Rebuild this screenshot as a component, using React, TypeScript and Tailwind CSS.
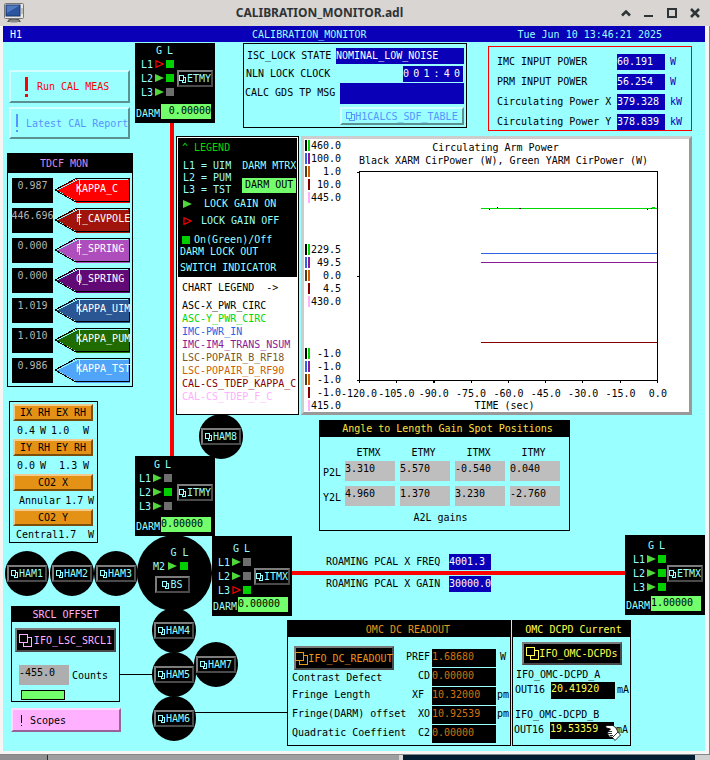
import React from "react";
import clsx from "clsx";

type Led = "green" | "gray";
type Gain = "on" | "off";

const kappas = [
    { value: "0.987", label: "KAPPA_C", fill: "#ff0000" },
    { value: "446.696", label: "F_CAVPOLE", fill: "#a0140c" },
    { value: "0.000", label: "F_SPRING", fill: "#ae4ebc" },
    { value: "0.000", label: "Q_SPRING", fill: "#610a75" },
    { value: "1.019", label: "KAPPA_UIM", fill: "#2a5693" },
    { value: "1.010", label: "KAPPA_PUM", fill: "#216c00" },
    { value: "0.986", label: "KAPPA_TST", fill: "#51a5f8" },
];

const heaters = [
    { title: "IX RH EX RH", cells: [["0.4", "ml-[4px]"], ["W", "ml-[5px]"], ["1.0", "ml-[5px]"], ["W", "ml-auto mr-[5px]"]] },
    { title: "IY RH EY RH", cells: [["0.0", "ml-[4px]"], ["W", "ml-[5px]"], ["1.3", "ml-[13px]"], ["W", "ml-auto mr-[5px]"]] },
    { title: "CO2 X", cells: [["Annular", "ml-[6px]"], ["1.7", "ml-[4px]"], ["W", "ml-auto"]] },
    { title: "CO2 Y", cells: [["Central", "ml-[3px]"], ["1.7", ""], ["W", "ml-auto"]] },
];

const powers = [
    { label: "IMC INPUT POWER", value: "60.191", unit: "W" },
    { label: "PRM INPUT POWER", value: "56.254", unit: "W" },
    { label: "Circulating Power X", value: "379.328", unit: "kW" },
    { label: "Circulating Power Y", value: "378.839", unit: "kW" },
];

const channels = [
    { name: "ASC-X_PWR_CIRC", color: "text-black" },
    { name: "ASC-Y_PWR_CIRC", color: "text-[#00d800]" },
    { name: "IMC-PWR_IN", color: "text-[#2a63e4]" },
    { name: "IMC-IM4_TRANS_NSUM", color: "text-[#8b1a96]" },
    { name: "LSC-POPAIR_B_RF18", color: "text-[#7c5726]" },
    { name: "LSC-POPAIR_B_RF90", color: "text-[#cd6100]" },
    { name: "CAL-CS_TDEP_KAPPA_C", color: "text-[#870000]" },
    { name: "CAL-CS_TDEP_F_C", color: "text-[#ffb0ff]" },
];

const axisBars = [
    ["bg-black", "bg-[#00d800]"],
    ["bg-[#2a63e4]", "bg-[#8b1a96]"],
    ["bg-[#5c3a14]", "bg-[#cd6100]"],
    ["bg-transparent", "bg-[#870000]"],
    ["bg-transparent", "bg-[#ffb0ff]"],
];

const axisGroups = [
    ["460.0", "100.0", "1.0", "10.0", "445.0"],
    ["229.5", "49.5", "0.0", "4.5", "430.0"],
    ["-1.0", "-1.0", "-1.0", "-1.0", "415.0"],
];

const timeTicks = ["-120.0", "-105.0", "-90.0", "-75.0", "-60.0", "-45.0", "-30.0", "-15.0", "0.0"];

const gains = [
    { row: "P2L", values: ["3.310", "5.570", "-0.540", "0.040"] },
    { row: "Y2L", values: ["4.960", "1.370", "3.230", "-2.760"] },
];
const optics = ["ETMX", "ETMY", "ITMX", "ITMY"];

const readouts = [
    { code: "PREF", value: "1.68680", unit: "W" },
    { code: "CD", value: "0.00000", unit: "" },
    { code: "XF", value: "10.32000", unit: "pm" },
    { code: "XO", value: "10.92539", unit: "pm" },
    { code: "C2", value: "0.00000", unit: "" },
];

const SmallIcon = () => (
    <svg className="w-[7px] h-[8px] shrink-0" viewBox="0 0 7 8" fill="none" stroke="currentColor" shapeRendering="crispEdges">
        <path d="M0.5 0.5H4.5V5.5H0.5ZM4.5 2.5H6.5V7.5H3.5V5.5" />
    </svg>
);

const BigIcon = () => (
    <svg className="w-[13px] h-[13px] shrink-0" viewBox="0 0 13 13" fill="none" stroke="currentColor" shapeRendering="crispEdges">
        <path d="M0.5 0.5H8.5V8.5H0.5ZM8.5 3.5H12.5V12.5H4.5V8.5" />
    </svg>
);

const Triangle = ({ gain }: { gain: Gain }) => (
    <svg className="w-[9px] h-[8px] shrink-0" viewBox="0 0 9 8">
        {gain === "on" ? (
            <path d="M0 0L9 4L0 8Z" fill="#4fd73b" />
        ) : (
            <path d="M1 0.7L8 4L1 7.3Z" fill="none" stroke="#ff0000" strokeWidth="1.2" />
        )}
    </svg>
);

const Square = ({ led }: { led: Led }) => (
    <span className={clsx("w-[8px] h-[8px] shrink-0", led === "green" ? "bg-[#00d000]" : "bg-[#6e6e6e]")} />
);

const NodeButton = ({ name, className }: { name: string; className?: string }) => (
    <button className={clsx("flex items-center justify-center gap-px h-[17px] border-2 border-t-[#7c7c7c] border-l-[#7c7c7c] border-b-[#4a4a4a] border-r-[#4a4a4a] bg-black text-[#99ffff]", className)}>
        <SmallIcon />
        {name}
    </button>
);

type TestMassProps = {
    name: string;
    darm: string;
    rows: [Gain, Led][];
    className: string;
    inset: string;
    darmAlign?: string;
};

const TestMass = ({ name, darm, rows, className, inset, darmAlign }: TestMassProps) => (
    <div className={clsx("absolute w-[80px] h-[80px] bg-black text-[#99ffff] flex flex-col", className)}>
        <div className={clsx("flex items-center justify-between pr-[2px]", inset)}>
            <div>
                <div className="flex gap-[5px] pl-[15px]">
                    <span>G</span>
                    <span>L</span>
                </div>
                {rows.map(([gain, led], i) => (
                    <div key={i} className="flex items-center gap-[2px] h-[14px]">
                        <span>L{i + 1}</span>
                        <Triangle gain={gain} />
                        <Square led={led} />
                    </div>
                ))}
            </div>
            <NodeButton name={name} className="w-[36px] mt-[14px]" />
        </div>
        <div className="mt-auto mb-[3px] flex">
            <span className="w-[26px] pl-px pt-[3px]">DARM</span>
            <output className={clsx("w-[50px] h-[15px] bg-[#73ff6b] text-black", darmAlign)}>{darm}</output>
        </div>
    </div>
);

const Ham = ({ name, className }: { name: string; className: string }) => (
    <div className={clsx("absolute w-[44px] h-[45px] rounded-full bg-black flex items-center justify-center", className)}>
        <NodeButton name={name} className="w-[40px] shrink-0" />
    </div>
);

const Diagram = () => (
    <>
        <div className="absolute left-[167px] top-[81px] w-[4px] h-[333px] bg-[#ff0000]" />
        <div className="absolute left-[288px] right-[80px] top-[529px] h-[4px] bg-[#ff0000]" />
        <div className="absolute left-[117px] top-[632px] w-[33px] h-px bg-black" />
        <div className="absolute left-[192px] top-[670px] w-[92px] h-px bg-black" />

        <Ham name="HAM8" className="left-[196px] top-[372px]" />
        <TestMass
            name="ETMY"
            darm="0.00000"
            rows={[["off", "green"], ["on", "green"], ["on", "gray"]]}
            className="left-[132px] top-px"
            inset="pt-px pl-[6px]"
            darmAlign="text-right"
        />
        <TestMass
            name="ITMY"
            darm="0.00000"
            rows={[["on", "gray"], ["on", "green"], ["on", "gray"]]}
            className="left-[132px] top-[414px]"
            inset="pt-[2px] pl-[4px]"
        />
        <Ham name="HAM1" className="left-[2px] top-[509px]" />
        <Ham name="HAM2" className="left-[47px] top-[509px]" />
        <Ham name="HAM3" className="left-[91px] top-[509px]" />

        <div className="absolute left-[134px] top-[493px] w-[75px] h-[76px] rounded-full bg-black text-[#99ffff] flex flex-col items-center">
            <div className="flex gap-[6px] pt-[11px] pl-[10px]">
                <span>G</span>
                <span>L</span>
            </div>
            <div className="flex items-center gap-[3px] h-[14px] mr-[8px]">
                <span>M2</span>
                <Triangle gain="on" />
                <Square led="green" />
            </div>
            <NodeButton name="BS" className="w-[35px] mt-[3px] mr-[4px]" />
        </div>

        <TestMass
            name="ITMX"
            darm="0.00000"
            rows={[["on", "gray"], ["on", "gray"], ["off", "green"]]}
            className="left-[209px] top-[494px]"
            inset="pt-[6px] pl-[6px]"
        />
        <TestMass
            name="ETMX"
            darm="1.00000"
            rows={[["on", "green"], ["on", "green"], ["on", "green"]]}
            className="right-0 top-[493px]"
            inset="pt-[4px] pl-[8px]"
        />
        <Ham name="HAM4" className="left-[149px] top-[566px]" />
        <Ham name="HAM7" className="left-[191px] top-[600px]" />
        <Ham name="HAM5" className="left-[149px] top-[610px]" />
        <Ham name="HAM6" className="left-[149px] top-[654px]" />
    </>
);

const Kappa = ({ value, label, fill }: { value: string; label: string; fill: string }) => (
    <div className="flex gap-[2px]">
        <output className="w-[41px] h-[25px] pt-px bg-black text-[#b4b4b4] flex justify-center">{value}</output>
        <button className="relative w-[75px] h-[25px] text-white whitespace-nowrap">
            <svg className="absolute inset-0 w-full h-full" viewBox="0 0 75 25" shapeRendering="crispEdges">
                <path d="M0 12L22 1H75V25H22Z" fill={fill} />
                <path d="M2 12L23 1.5H73M2 13L20 23M24.5 1V17" stroke="#99ffff" fill="none" />
                <path d="M0 12L21 0.5H74.5V23.5H20L0 12" stroke="#000" fill="none" />
            </svg>
            <span className="relative flex justify-end pb-[5px]">
                <span className="w-[54px] text-left">{label}</span>
            </span>
        </button>
    </div>
);

const Sidebar = () => (
    <div className="w-[130px] shrink-0 flex flex-col items-start pt-[28px] pb-[19px]">
        <button className="ml-[6px] w-[121px] h-[33px] flex items-center border-2 border-t-[#d2ffff] border-l-[#d2ffff] border-b-[#5a9191] border-r-[#5a9191] text-[#ff0000] overflow-hidden whitespace-nowrap">
            <svg className="w-[3px] h-[20px] ml-[14px] mr-[9px]" viewBox="0 0 3 20" fill="currentColor">
                <path d="M0 0H3V14H0ZM0 17H3V20H0Z" />
            </svg>
            Run CAL MEAS
        </button>
        <button className="ml-[6px] mt-[4px] w-[121px] h-[32px] flex items-center border-2 border-t-[#d2ffff] border-l-[#d2ffff] border-b-[#5a9191] border-r-[#5a9191] text-[#5893ff] whitespace-nowrap">
            <svg className="w-[2px] h-[18px] ml-[5px] mr-[8px] shrink-0" viewBox="0 0 2 18" fill="currentColor">
                <path d="M0 0H2V13H0ZM0 16H2V18H0Z" />
            </svg>
            Latest CAL Report
        </button>

        <section className="ml-[4px] mt-[14px] w-[126px] border border-black pb-[3px]">
            <h2 className="h-[19px] mb-[5px] pr-[12px] bg-black text-[#d68be8] flex items-center justify-center">TDCF MON</h2>
            <div className="flex flex-col gap-[5px] pl-[4px]">
                {kappas.map((k) => (
                    <Kappa key={k.label} {...k} />
                ))}
            </div>
        </section>

        <section className="ml-[6px] mt-[14px] w-[89px] border border-black px-[3px] pt-[2px]">
            {heaters.map((h, i) => (
                <div key={h.title}>
                    <button className="w-[80px] h-[17px] flex items-center justify-center border-2 border-t-[#f4cb8d] border-l-[#f4cb8d] border-b-[#7d4e0a] border-r-[#7d4e0a] bg-[#e39216]">
                        {h.title}
                    </button>
                    <div className={clsx("flex items-center", i === 3 ? "h-[16px]" : "h-[18px]")}>
                        {h.cells.map(([text, place], j) => (
                            <span key={j} className={place}>{text}</span>
                        ))}
                    </div>
                </div>
            ))}
        </section>

        <section className="ml-[8px] mt-[63px] w-[109px] h-[96px] border border-black">
            <h2 className="h-[15px] pt-px bg-black text-[#ffb0ff] text-center">SRCL OFFSET</h2>
            <button className="mt-[6px] ml-[3px] w-[101px] h-[24px] flex items-center justify-center gap-[2px] border-2 border-t-[#7c7c7c] border-l-[#7c7c7c] border-b-[#4a4a4a] border-r-[#4a4a4a] bg-black text-[#ffb0ff]">
                <BigIcon />
                IFO_LSC_SRCL1
            </button>
            <label className="mt-[13px] ml-[7px] flex items-center gap-[3px]">
                <input className="w-[50px] h-[20px] pb-[6px] bg-[#aeaeae]" defaultValue="-455.0" />
                Counts
            </label>
            <div className="mt-[5px] ml-[9px] w-[44px] h-[10px] border border-black bg-[#73ff6b]" />
        </section>

        <button className="ml-[8px] mt-[6px] w-[110px] h-[24px] pl-[8px] flex items-center border-2 border-t-[#ffdcff] border-l-[#ffdcff] border-b-[#966496] border-r-[#966496] bg-[#ffb0ff]">
            <svg className="w-[2px] h-[11px] mr-[7px]" viewBox="0 0 2 11" fill="currentColor" shapeRendering="crispEdges">
                <path d="M0 0H1V8H0ZM0 10H1V11H0Z" />
            </svg>
            Scopes
        </button>
    </div>
);

const LockPanel = () => (
    <section className="w-[224px] h-[85px] border border-black pt-[4px] pr-[2px]">
        <div className="flex justify-between">
            <span className="pl-[3px] pt-px">ISC_LOCK STATE</span>
            <output className="w-[128px] h-[16px] pt-px bg-[#0a00b8] text-white">NOMINAL_LOW_NOISE</output>
        </div>
        <div className="mt-[2px] pr-px flex justify-between">
            <span className="pl-[2px] pt-px">NLN LOCK CLOCK</span>
            <output className="w-[60px] h-[16px] pt-px pr-[3px] bg-[#0a00b8] text-white flex justify-between">
                {"001:40".split("").map((c, i) => (
                    <span key={i}>{c}</span>
                ))}
            </output>
        </div>
        <div className="mt-px flex justify-between">
            <span className="pt-[3px] pl-px">CALC GDS TP MSG</span>
            <output className="w-[124px] h-[21px] bg-[#0a00b8]" />
        </div>
        <button className="mt-[3px] ml-auto w-[124px] h-[18px] flex items-center justify-center border-2 border-t-[#d2ffff] border-l-[#d2ffff] border-b-[#5a9191] border-r-[#5a9191] text-[#5893ff]">
            <svg className="w-[9px] h-[9px]" viewBox="0 0 9 9" fill="none" stroke="currentColor" shapeRendering="crispEdges">
                <path d="M0.5 0.5H5.5V6.5H0.5ZM5.5 2.5H8.5V8.5H3.5V6.5" />
            </svg>
            H1CALCS_SDF_TABLE
        </button>
    </section>
);

const PowerPanel = () => (
    <section className="mt-[3px] w-[204px] h-[85px] border border-[#ff0000] pt-[7px] pl-[8px] flex flex-col gap-[4px]">
        {powers.map((p) => (
            <div key={p.label} className="flex h-[16px]">
                <span className="w-[120px] pt-px">{p.label}</span>
                <output className="w-[48px] pt-px bg-[#0a00b8] text-white">{p.value}</output>
                <span className="pl-[5px] pt-px text-[#0a00b8]">{p.unit}</span>
            </div>
        ))}
    </section>
);

const Legend = () => (
    <section className="w-[123px] shrink-0 border border-black bg-white p-px">
        <div className="bg-black text-[#99ffff] h-[139px] pl-[2px] pt-[3px]">
            <h2 className="text-[#00d800] pl-[2px]">^ LEGEND</h2>
            <div className="mt-[6px] pl-[3px] flex gap-[11px] leading-[12px]">
                <div>
                    <p>L1 = UIM</p>
                    <p>L2 = PUM</p>
                    <p>L3 = TST</p>
                </div>
                <div>
                    <p className="whitespace-nowrap">DARM MTRX</p>
                    <p className="mt-[6px] w-[54px] h-[15px] pt-px bg-[#73ff6b] text-black text-center">DARM OUT</p>
                </div>
            </div>
            <div className="mt-px pl-[3px] flex items-center gap-[12px]">
                <Triangle gain="on" />
                LOCK GAIN ON
            </div>
            <div className="mt-[4px] pl-[3px] flex items-center gap-[9px]">
                <Triangle gain="off" />
                LOCK GAIN OFF
            </div>
            <div className="mt-[6px] pl-[2px] flex items-center gap-[4px]">
                <Square led="green" />
                On(Green)/Off
            </div>
            <p className="leading-[12px]">DARM LOCK OUT</p>
            <p className="mt-[3px]">SWITCH INDICATOR</p>
        </div>
        <div className="pl-[4px] pt-[4px]">
            <h2 className="whitespace-pre mb-[5px]">CHART LEGEND  -&gt;</h2>
            {channels.map((c) => (
                <p key={c.name} className={clsx("leading-[13px]", c.color)}>{c.name}</p>
            ))}
        </div>
    </section>
);

const StripChart = () => (
    <section className="ml-[2px] flex-1 h-[279px] flex bg-white border-[3px] border-t-[#cdcdcd] border-l-[#cdcdcd] border-b-[#999999] border-r-[#999999]">
        <div className="w-[37px] shrink-0 pl-px flex flex-col justify-between">
            {axisGroups.map((group, g) => (
                <div key={g}>
                    {group.map((label, i) => (
                        <div key={i} className="flex items-center h-[13px]">
                            <span className={clsx("w-[2px] h-[11px]", axisBars[i][0])} />
                            <span className={clsx("w-[2px] h-[11px] ml-px", axisBars[i][1])} />
                            <span className="ml-auto">{label}</span>
                        </div>
                    ))}
                </div>
            ))}
        </div>
        <div className="flex-1 pl-[18px] pr-[31px] pt-[2px] text-center">
            <h2 className="pr-[26px] leading-[13px]">Circulating Arm Power</h2>
            <p className="pr-[10px] leading-[13px] whitespace-nowrap">Black XARM CirPower (W), Green YARM CirPower (W)</p>
            <svg className="mt-[4px] w-full h-[214px] overflow-visible" viewBox="0 0 297 214" preserveAspectRatio="none" fill="none" shapeRendering="crispEdges">
                <rect x="0.5" y="0.5" width="296" height="209" stroke="#000" />
                <path d="M-2 1.5H0M-2 105.5H0M-2 209.5H0M0.5 210V212M37.5 210V212M74.5 210V212M111.5 210V212M148.5 210V212M185.5 210V212M222.5 210V212M259.5 210V212M296.5 210V212" stroke="#000" />
                <path d="M121 37.5H296" stroke="#00d800" />
                <path d="M129 38.5H130M137 36.5H138M159 37.5H161M286 38.5H287M290 37.5H291" stroke="#000" />
                <path d="M291 36.5H294" stroke="#00d800" />
                <path d="M121 82.5H296" stroke="#2a63e4" />
                <path d="M121 91.5H296" stroke="#8b1a96" />
                <path d="M121 171.5H296" stroke="#870000" />
            </svg>
            <div className="mt-[2px] flex justify-between">
                {timeTicks.map((t) => (
                    <span key={t} className="w-0 flex justify-center whitespace-nowrap">{t}</span>
                ))}
            </div>
            <p className="pr-[8px] leading-[12px]">TIME (sec)</p>
        </div>
    </section>
);

const SpotTable = () => (
    <section className="mt-[5px] ml-[143px] w-[251px] h-[111px] border border-black">
        <h2 className="h-[16px] pt-px bg-black text-[#ffe040] text-center pl-[6px]">Angle to Length Gain Spot Positions</h2>
        <table className="mt-[7px]">
            <thead>
                <tr>
                    <td className="w-[25px]" />
                    {optics.map((o) => (
                        <th key={o} scope="col" className="p-0 w-[55px] h-[17px] pr-[8px] align-middle font-normal text-center">{o}</th>
                    ))}
                </tr>
            </thead>
            <tbody>
                {gains.map((g) => (
                    <tr key={g.row}>
                        <th scope="row" className="p-0 pl-[3px] pb-[3px] font-normal text-left">{g.row}</th>
                        {g.values.map((v, i) => (
                            <td key={i} className="p-0 pb-[5px]">
                                <input aria-label={`${g.row} ${optics[i]}`} defaultValue={v} className="block w-[50px] h-[20px] pb-[6px] bg-[#bebebe]" />
                            </td>
                        ))}
                    </tr>
                ))}
            </tbody>
        </table>
        <p className="text-center pr-[8px]">A2L gains</p>
    </section>
);

const OmcReadout = () => (
    <section className="w-[224px] h-[126px] border border-black">
        <h2 className="h-[16px] pt-[2px] pl-[18px] bg-black text-[#e8961c] text-center">OMC DC READOUT</h2>
        <div className="flex pl-[4px]">
            <div className="w-[114px] pt-[9px] whitespace-nowrap">
                <button className="ml-[2px] w-[100px] h-[24px] flex items-center justify-center border-2 border-t-[#7c7c7c] border-l-[#7c7c7c] border-b-[#4a4a4a] border-r-[#4a4a4a] bg-black text-[#e8961c]">
                    <BigIcon />
                    IFO_DC_READOUT
                </button>
                <p className="leading-[15px]">Contrast Defect</p>
                <p className="leading-[19px]">Fringe Length</p>
                <p className="leading-[19px]">Fringe(DARM) offset</p>
                <p className="leading-[19px]">Quadratic Coeffient</p>
            </div>
            <div className="flex-1 pt-[12px] flex flex-col gap-px">
                {readouts.map((r) => (
                    <div key={r.code} className="flex h-[18px]">
                        <span className={clsx("w-[26px] pt-px text-right", r.code === "XF" ? "pr-[8px]" : "pr-[2px]")}>{r.code}</span>
                        <output className="w-[64px] pt-px bg-black text-[#d6700e]">{r.value}</output>
                        <span className={clsx("pt-px", r.unit === "W" ? "pl-[4px]" : "pl-px")}>{r.unit}</span>
                    </div>
                ))}
            </div>
        </div>
    </section>
);

const OmcCurrent = () => (
    <section className="relative ml-px w-[119px] h-[126px] border border-black">
        <h2 className="h-[16px] pt-[2px] pl-[4px] bg-black text-[#ffff50] text-center">OMC DCPD Current</h2>
        <button className="mt-[5px] ml-[9px] w-[100px] h-[23px] flex items-center justify-center border-2 border-t-[#7c7c7c] border-l-[#7c7c7c] border-b-[#4a4a4a] border-r-[#4a4a4a] bg-black text-[#ffff50]">
            <BigIcon />
            IFO_OMC-DCPDs
        </button>
        <p className="mt-[3px] pl-[3px]">IFO_OMC-DCPD_A</p>
        <div className="mt-px pl-[2px] flex">
            <span className="w-[36px] pt-px">OUT16</span>
            <output className="w-[64px] h-[17px] bg-black text-[#ffff50]">20.41920</output>
            <span className="pl-[2px] pt-px">mA</span>
        </div>
        <p className="mt-[9px] pl-[2px]">IFO_OMC-DCPD_B</p>
        <div className="mt-px pl-px flex">
            <span className="w-[36px] pt-px">OUT16</span>
            <output className="w-[64px] h-[17px] bg-black text-[#ffff50]">19.53359</output>
            <span className="pl-[2px] pt-px">mA</span>
        </div>
        {/* pointer resting on the B readout */}
        <svg className="absolute left-[92px] top-[104px] w-[16px] h-[16px]" viewBox="0 0 16 16" fill="#fff" stroke="#000" strokeWidth="0.8">
            <path d="M0.5 1.5L2 0.5H8L11 3L13 7L15.5 10L10 15.5L7 12H4.5L3.5 10.5L2.5 8.5L3 6.5L5.5 4L1.5 3Z" />
            <path d="M3 6.5H7M3 8.5H7M4.5 10.5H8M13 7L7.5 12.5" fill="none" />
        </svg>
    </section>
);

const TitleBar = () => (
    <header className="h-[26px] bg-[#d9d5d2] flex items-center justify-between pl-[4px] pr-[8px]">
        <svg className="w-[20px] h-[20px] shrink-0" viewBox="0 0 20 20">
            <path d="M5 16H15L17 19H3Z" fill="#555" />
            <ellipse cx="10" cy="18" rx="5" ry="1.5" fill="#888" />
            <rect x="0.5" y="0.5" width="19" height="15" rx="1" fill="#e9e9e4" stroke="#777" />
            <rect x="2" y="2" width="14" height="11" fill="#2c55a0" stroke="#163468" />
            <path d="M2.5 2.5H15.5L3 10Z" fill="#5079c0" />
            <path d="M18 5V11" stroke="#999" />
        </svg>
        <h1 className="font-['Noto_Sans','Open_Sans',sans-serif] font-bold text-[12px] leading-[18px] text-[#2e3436] pr-[4px]">CALIBRATION_MONITOR.adl</h1>
        <div className="flex items-center gap-[9px] text-[#2e3436]">
            <button aria-label="Roll up">
                <svg className="w-[14px] h-[14px]" viewBox="0 0 14 14" fill="none" stroke="currentColor" strokeWidth="2.5">
                    <path d="M3 9.5L7 5.5L11 9.5" />
                </svg>
            </button>
            <button aria-label="Minimize">
                <svg className="w-[14px] h-[14px]" viewBox="0 0 14 14" fill="currentColor">
                    <path d="M2 9H11V11H2Z" />
                </svg>
            </button>
            <button aria-label="Maximize">
                <svg className="w-[14px] h-[14px]" viewBox="0 0 14 14" fill="none" stroke="currentColor" strokeWidth="2">
                    <path d="M3 3H11V11H3Z" />
                </svg>
            </button>
            <button aria-label="Close">
                <svg className="w-[14px] h-[14px]" viewBox="0 0 14 14" fill="none" stroke="currentColor" strokeWidth="2.5">
                    <path d="M3 3L11 11M11 3L3 11" />
                </svg>
            </button>
        </div>
    </header>
);

const App = () => {
    return (
        <div className="min-h-screen flex flex-col bg-[#9f9f9f] font-['DejaVu_Sans_Mono',monospace] text-[10px] leading-[13px] text-black">
            <TitleBar />
            <div className="pl-[3px] pr-[4px] pb-[3px] bg-[#f6f5f4] border-r border-b border-[#858585]">
                <div className="h-[16px] flex items-center bg-[#0a00b8] text-[#99ffff]">
                    <span className="pl-[7px] text-white">H1</span>
                    <span className="ml-[230px]">CALIBRATION_MONITOR</span>
                    <time className="ml-auto pr-[43px]">Tue Jun 10 13:46:21 2025</time>
                </div>
                <main className="relative flex bg-[#99ffff]">
                    <Diagram />
                    <Sidebar />
                    <div className="flex-1 ml-[43px] pt-px">
                        <div className="pl-[67px] pr-[17px] flex justify-between">
                            <LockPanel />
                            <PowerPanel />
                        </div>
                        <div className="mt-[5px] pr-[17px] flex">
                            <Legend />
                            <StripChart />
                        </div>
                        <SpotTable />
                        <div className="mt-[23px] ml-[150px] flex flex-col gap-[6px]">
                            <div className="flex h-[16px]">
                                <span className="w-[123px] pt-px">ROAMING PCAL X FREQ</span>
                                <output className="w-[42px] pt-px bg-[#0a00b8] text-white">4001.3</output>
                            </div>
                            <div className="flex h-[16px]">
                                <span className="w-[123px] pt-px">ROAMING PCAL X GAIN</span>
                                <output className="w-[42px] pt-px bg-[#0a00b8] text-white">30000.0</output>
                            </div>
                        </div>
                        <div className="mt-[28px] ml-[111px] flex">
                            <OmcReadout />
                            <OmcCurrent />
                        </div>
                    </div>
                </main>
            </div>
            <footer className="flex-1 flex">
                <div className="w-[48px] bg-[#8f8f8f] border-r border-[#202080]" />
                <div className="flex-1" />
                <div className="w-[4px] bg-[#d8d8d8]" />
                <div className="w-[292px] bg-[#041c30]" />
                <div className="w-[15px] bg-[#d0d0d0]" />
            </footer>
        </div>
    );
};

export default App;
